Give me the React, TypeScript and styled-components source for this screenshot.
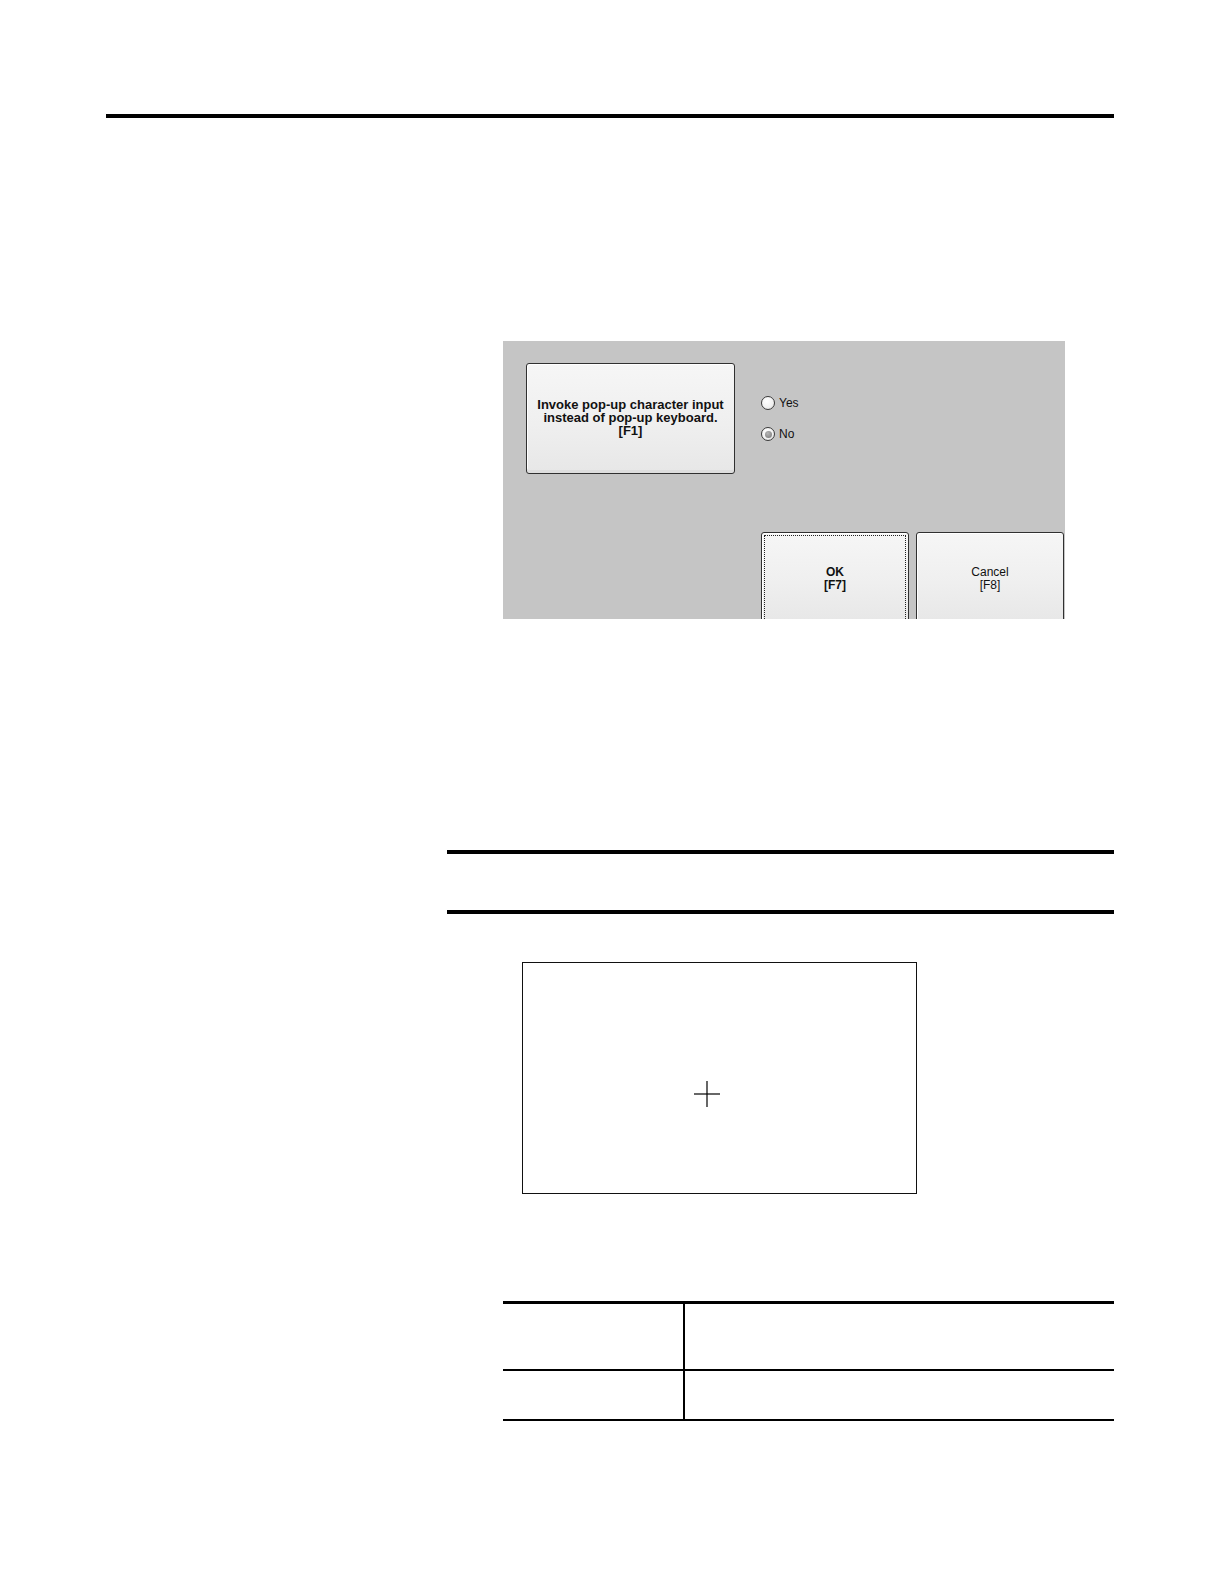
import React from "react";
import styled, { createGlobalStyle } from "styled-components";

const Global = createGlobalStyle`
  html, body { margin: 0; padding: 0; background: #ffffff; }
  body { font-family: "Liberation Sans", Arial, sans-serif; }
`;

const Page = styled.div`
  width: 1224px;
  height: 1584px;
  background: #ffffff;
  display: flex;
  flex-direction: column;
  overflow: hidden;
`;

const Rule = styled.div<{ $left: number; $width: number; $top: number; $thick: number }>`
  margin-left: ${(p) => p.$left}px;
  margin-top: ${(p) => p.$top}px;
  width: ${(p) => p.$width}px;
  height: ${(p) => p.$thick}px;
  background: #000;
  flex: none;
`;

const Panel = styled.div`
  margin-left: 503px;
  margin-top: 223px;
  width: 562px;
  height: 278px;
  background: #c5c5c5;
  overflow: hidden;
  display: flex;
  flex-direction: column;
  padding: 22px 0 0 23px;
  box-sizing: border-box;
  flex: none;
`;

const TopRow = styled.div`
  display: flex;
  align-items: flex-start;
`;

const KeyButton = styled.div<{ $w: number; $h: number; $bold?: boolean; $focus?: boolean; $size?: number }>`
  position: relative;
  width: ${(p) => p.$w}px;
  height: ${(p) => p.$h}px;
  box-sizing: border-box;
  border: 1px solid #303030;
  border-radius: 3px;
  background: linear-gradient(to bottom, #f6f6f6 0%, #efefef 55%, #e7e7e7 100%);
  box-shadow: inset 0 -3px 0 #dedede, inset 1px 1px 0 #ffffff;
  display: flex;
  flex-direction: column;
  align-items: center;
  justify-content: ${(p) => (p.$focus !== undefined ? "flex-start" : "center")};
  padding-top: ${(p) => (p.$focus !== undefined ? "33px" : "0")};
  padding-bottom: ${(p) => (p.$focus !== undefined ? "0" : "2px")};
  font-family: "Liberation Sans", Arial, sans-serif;
  font-size: ${(p) => p.$size ?? 12}px;
  line-height: 13px;
  font-weight: ${(p) => (p.$bold ? 700 : 400)};
  color: #111;
  text-align: center;
  flex: none;
  ${(p) =>
    p.$focus
      ? `&::after {
    content: "";
    position: absolute;
    left: 2px; top: 2px; right: 2px; bottom: 2px;
    border: 1px dotted #222;
  }`
      : ""}
`;

const Line = styled.span`
  display: block;
  white-space: nowrap;
`;

const RadioGroup = styled.div`
  margin-left: 26px;
  margin-top: 33px;
  display: flex;
  flex-direction: column;
  gap: 17px;
`;

const RadioRow = styled.div`
  display: flex;
  align-items: center;
  gap: 4px;
  height: 14px;
  font-family: "Liberation Sans", Arial, sans-serif;
  font-size: 12px;
  color: #111;
`;

const RadioCircle = styled.span<{ $checked?: boolean }>`
  width: 14px;
  height: 14px;
  box-sizing: border-box;
  border-radius: 50%;
  border: 1px solid #3a3a3a;
  background: radial-gradient(circle at 40% 35%, #ffffff 0%, #f2f2f2 55%, #d8d8d8 100%);
  display: flex;
  align-items: center;
  justify-content: center;
  &::after {
    content: "";
    display: ${(p) => (p.$checked ? "block" : "none")};
    width: 7px;
    height: 7px;
    border-radius: 50%;
    background: radial-gradient(circle at 40% 35%, #b5b5b5 0%, #8a8a8a 70%, #7a7a7a 100%);
  }
`;

const BottomRow = styled.div`
  display: flex;
  gap: 7px;
  margin-left: 235px;
  margin-top: 58px;
`;

const Frame = styled.div`
  position: relative;
  margin-left: 522px;
  margin-top: 48px;
  width: 395px;
  height: 232px;
  box-sizing: border-box;
  border: 1.5px solid #111;
  background: #fff;
  flex: none;
`;

const Cross = styled.svg`
  position: absolute;
  left: 171px;
  top: 118px;
`;

const Table = styled.div`
  margin-left: 503px;
  margin-top: 107px;
  width: 611px;
  border-top: 3px solid #000;
  display: grid;
  grid-template-columns: 182px 1fr;
  flex: none;
`;

const Cell = styled.div<{ $h: number; $first?: boolean }>`
  height: ${(p) => p.$h}px;
  border-bottom: 2px solid #000;
  border-right: ${(p) => (p.$first ? "2px solid #000" : "none")};
`;

export default function App() {
  return (
    <>
      <Global />
      <Page>
        <Rule $left={106} $width={1008} $top={114} $thick={4} />
        <Panel>
          <TopRow>
            <KeyButton $w={209} $h={111} $bold $size={13}>
              <Line>Invoke pop-up character input</Line>
              <Line>instead of pop-up keyboard.</Line>
              <Line>[F1]</Line>
            </KeyButton>
            <RadioGroup>
              <RadioRow>
                <RadioCircle />
                <span>Yes</span>
              </RadioRow>
              <RadioRow>
                <RadioCircle $checked />
                <span>No</span>
              </RadioRow>
            </RadioGroup>
          </TopRow>
          <BottomRow>
            <KeyButton $w={148} $h={92} $bold $focus>
              <Line>OK</Line>
              <Line>[F7]</Line>
            </KeyButton>
            <KeyButton $w={148} $h={92} $focus={false}>
              <Line>Cancel</Line>
              <Line>[F8]</Line>
            </KeyButton>
          </BottomRow>
        </Panel>
        <Rule $left={447} $width={667} $top={231} $thick={4} />
        <Rule $left={447} $width={667} $top={56} $thick={4} />
        <Frame>
          <Cross width="26" height="26" viewBox="0 0 26 26">
            <line x1="0" y1="13" x2="26" y2="13" stroke="#000" strokeWidth="1.2" />
            <line x1="13" y1="0" x2="13" y2="26" stroke="#000" strokeWidth="1.2" />
          </Cross>
        </Frame>
        <Table>
          <Cell $h={65} $first />
          <Cell $h={65} />
          <Cell $h={48} $first />
          <Cell $h={48} />
        </Table>
      </Page>
    </>
  );
}
